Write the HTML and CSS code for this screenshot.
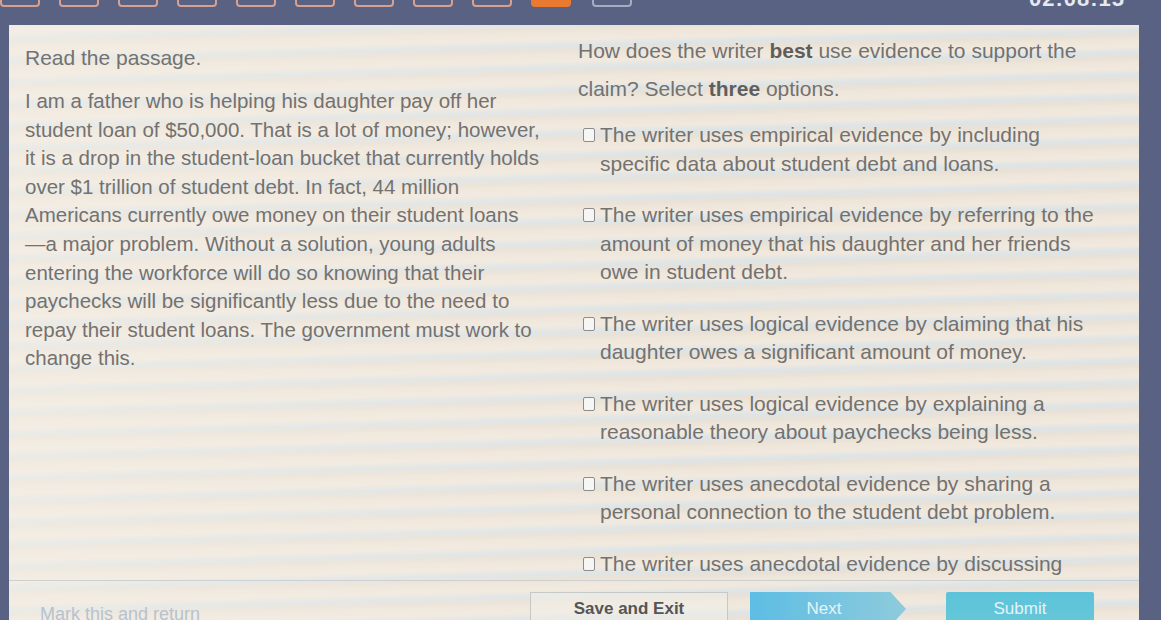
FILE: index.html
```html
<!DOCTYPE html>
<html lang="en">
<head>
<meta charset="utf-8">
<title>Student debt question</title>
<link rel="stylesheet" href="styles.css">
</head>
<body>
<header class="topbar">
  <div class="qnav">
    <span class="qbox"></span><span class="qbox"></span><span class="qbox"></span><span class="qbox"></span><span class="qbox"></span>
    <span class="qbox"></span><span class="qbox"></span><span class="qbox"></span><span class="qbox"></span>
    <span class="qbox qbox-current"></span><span class="qbox qbox-next"></span>
  </div>
  <div class="timer">02:08:15</div>
</header>
<main class="panel">
  <div class="content">
    <section class="passage">
      <p class="instruction">Read the passage.</p>
      <p class="passage-text">I am a father who is helping his daughter pay off her student loan of $50,000. That is a lot of money; however, it is a drop in the student-loan bucket that currently holds over $1 trillion of student debt. In fact, 44 million Americans currently owe money on their student loans&#8203;<span class="nw">—a</span> major problem. Without a solution, young adults entering the workforce will do so knowing that their paychecks will be significantly less due to the need to repay their student loans. The government must work to change this.</p>
    </section>
    <section class="question">
      <p class="prompt">How does the writer <b>best</b> use evidence to support the claim? Select <b>three</b> options.</p>
      <ul class="options">
        <li class="option"><span class="check"></span><span class="opt-text">The writer uses empirical evidence by including specific data about student debt and loans.</span></li>
        <li class="option"><span class="check"></span><span class="opt-text">The writer uses empirical evidence by referring to the amount of money that his daughter and her friends owe in student debt.</span></li>
        <li class="option"><span class="check"></span><span class="opt-text">The writer uses logical evidence by claiming that his daughter owes a significant amount of money.</span></li>
        <li class="option"><span class="check"></span><span class="opt-text">The writer uses logical evidence by explaining a reasonable theory about paychecks being less.</span></li>
        <li class="option"><span class="check"></span><span class="opt-text">The writer uses anecdotal evidence by sharing a personal connection to the student debt problem.</span></li>
        <li class="option"><span class="check"></span><span class="opt-text">The writer uses anecdotal evidence by discussing personal details about his daughter's loan.</span></li>
      </ul>
    </section>
  </div>
  <footer class="footer">
    <a class="mark">Mark this and return</a>
    <div class="actions">
      <button class="btn btn-save">Save and Exit</button>
      <button class="btn btn-next">Next</button>
      <button class="btn btn-submit">Submit</button>
    </div>
  </footer>
</main>
</body>
</html>
```

FILE: styles.css
```css
html, body {
  margin: 0;
  padding: 0;
}
body {
  width: 1161px;
  height: 620px;
  overflow: hidden;
  background: #5a6283;
  font-family: "Liberation Sans", Arial, sans-serif;
}
.topbar {
  height: 25px;
  display: flex;
  justify-content: space-between;
  overflow: hidden;
}
.qnav {
  display: flex;
  gap: 19px;
  margin-top: -6px;
}
.qbox {
  width: 36px;
  height: 9px;
  border: 2px solid #d8a08e;
  border-radius: 4px;
}
.qbox-current {
  background: #ea7a30;
  border-color: #ea7a30;
}
.qbox-next {
  margin-left: 2px;
  border-color: #a7acc0;
}
.timer {
  margin: -14px 36px 0 0;
  font-size: 22px;
  font-weight: bold;
  color: #e6e8ef;
  letter-spacing: 1px;
}
.panel {
  margin: 0 22px 0 9px;
  height: 595px;
  display: flex;
  flex-direction: column;
  background:
    linear-gradient(90deg, rgba(245, 240, 232, 0.55) 0%, rgba(245, 240, 232, 0.15) 45%, rgba(245, 240, 232, 0) 60%),
    repeating-linear-gradient(178.5deg, #efe6da 0px, #f1e9de 7px, #dde4e6 13px, #e9e1d6 18px, #efe6da 22px);
  color: #727272;
}
.content {
  height: 555px;
  overflow: hidden;
  display: grid;
  grid-template-columns: 553px 1fr;
  font-size: 21px;
}
.passage {
  padding: 19px 0 0 16px;
}
.instruction {
  margin: 0;
  line-height: 28px;
}
.passage-text {
  margin: 15px 0 0;
  width: 522px;
  font-size: 20.5px;
  line-height: 28.6px;
}
.nw {
  white-space: nowrap;
}
.question {
  padding: 7px 0 0 16px;
  width: 520px;
}
.prompt {
  margin: 0;
  line-height: 38px;
}
.prompt b {
  color: #5e5e5e;
}
.options {
  list-style: none;
  margin: 13px 0 0;
  padding: 0 0 0 5px;
}
.option {
  display: flex;
  align-items: flex-start;
  gap: 5px;
  line-height: 28.5px;
  margin-bottom: 23px;
}
.check {
  flex: none;
  width: 10px;
  height: 12px;
  margin-top: 7px;
  border: 1.5px solid #8c8c8c;
  border-radius: 2px;
  background: #f6f6f4;
}
.opt-text {
  width: 510px;
}
.footer {
  flex: 1;
  border-top: 1px solid #cdd0d0;
  display: flex;
  justify-content: space-between;
  padding: 11px 0 0 31px;
  overflow: hidden;
}
.mark {
  margin-top: 12px;
  font-size: 18px;
  color: #b6c2cf;
}
.actions {
  display: flex;
  gap: 20px;
  margin-right: 45px;
}
.btn {
  height: 34px;
  border: none;
  font-family: "Liberation Sans", Arial, sans-serif;
  font-size: 17px;
}
.btn-save {
  width: 198px;
  border: 1px solid #c6c8c8;
  background: rgba(240, 238, 232, 0.6);
  color: #555;
  font-weight: bold;
  margin-right: 2px;
}
.btn-next {
  width: 156px;
  color: #e4f3f8;
  background: linear-gradient(90deg, #5dbde4, #8ecbdc);
  clip-path: polygon(0 0, 90% 0, 100% 50%, 90% 100%, 0 100%);
  padding-right: 14px;
}
.btn-submit {
  width: 148px;
  margin-left: 20px;
  color: #e4f3f8;
  background: linear-gradient(180deg, #5cc3da, #66c8d8);
  border-radius: 2px;
}
```
